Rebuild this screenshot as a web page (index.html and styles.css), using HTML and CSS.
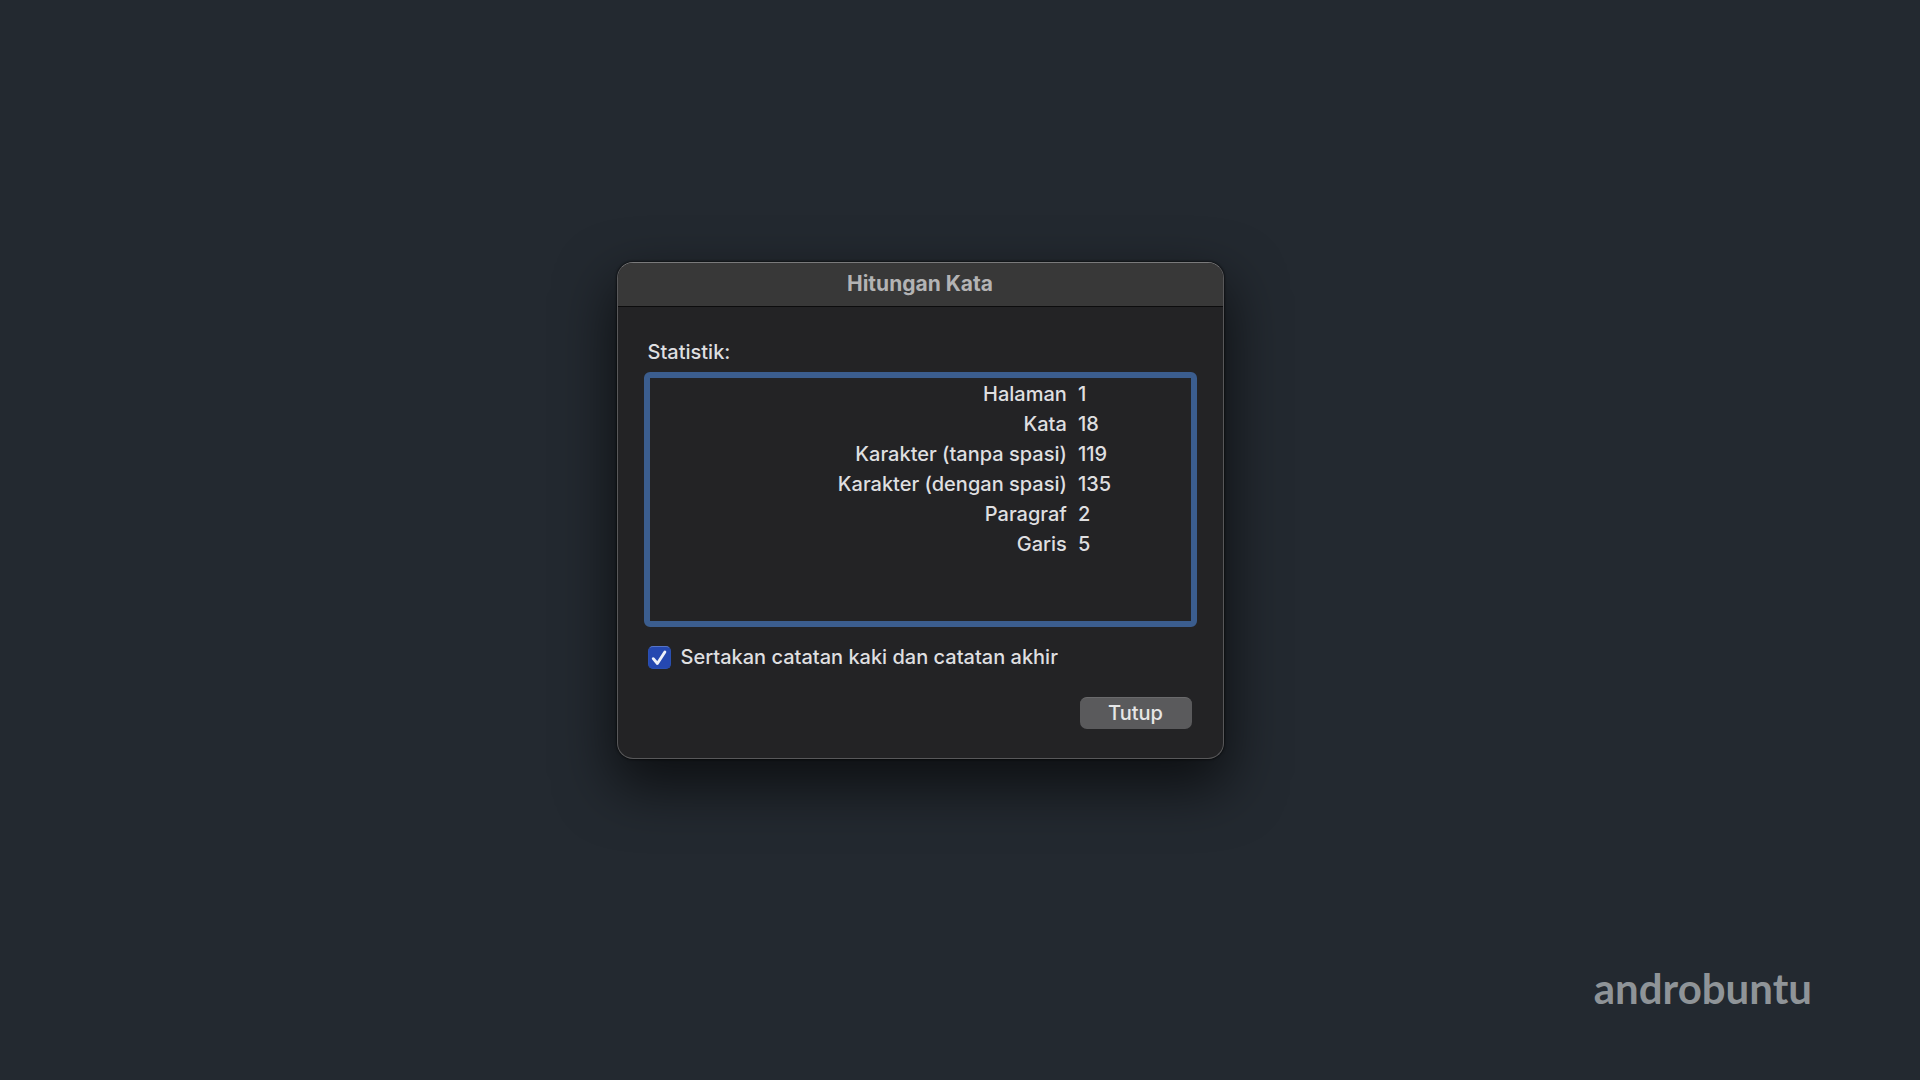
FILE: index.html
```html
<!DOCTYPE html>
<html lang="id">
<head>
<meta charset="utf-8">
<meta name="viewport" content="width=device-width, initial-scale=1">
<title>Hitungan Kata</title>
<link rel="stylesheet" href="styles.css">
</head>
<body>
<main class="desktop">
  <section class="dialog" role="dialog" aria-labelledby="dialog-title">
    <header class="titlebar">
      <h1 class="title" id="dialog-title">Hitungan Kata</h1>
    </header>
    <form class="content">
      <h2 class="heading" id="stats-label">Statistik:</h2>
      <div class="stats-box">
        <table class="stats" aria-labelledby="stats-label">
          <tbody>
            <tr><th scope="row">Halaman</th><td>1</td></tr>
            <tr><th scope="row">Kata</th><td>18</td></tr>
            <tr><th scope="row">Karakter (tanpa spasi)</th><td>119</td></tr>
            <tr><th scope="row">Karakter (dengan spasi)</th><td>135</td></tr>
            <tr><th scope="row">Paragraf</th><td>2</td></tr>
            <tr><th scope="row">Garis</th><td>5</td></tr>
          </tbody>
        </table>
      </div>
      <div class="option">
        <span class="tick">
          <input class="tick-input" type="checkbox" id="footnotes" checked>
          <svg class="tick-mark" viewBox="0 0 24 24" aria-hidden="true"><path d="M5.5 13.2 9.8 18.2 17.6 6.2"/></svg>
        </span>
        <label for="footnotes">Sertakan catatan kaki dan catatan akhir</label>
      </div>
      <div class="actions">
        <button class="button" type="button">Tutup</button>
      </div>
    </form>
  </section>
  <p class="brand">androbuntu</p>
</main>
</body>
</html>
```
FILE: styles.css
```css
* {
  box-sizing: border-box;
}

body {
  margin: 0;
  background: #232930;
  color: #dfdfe0;
  font-family: Inter, "Liberation Sans", sans-serif;
  font-size: 20px;
  font-weight: 500;
  line-height: 30px;
}

.desktop {
  display: grid;
  min-height: 100vh;
}

.dialog,
.brand {
  grid-area: 1 / 1;
}

.dialog {
  place-self: center;
  width: 100%;
  max-width: 607px;
  margin: 0 80px 59px 0;
  overflow: hidden;
  border: 1px solid #58585a;
  border-top-color: #7a7a7b;
  border-radius: 16px;
  background: #232325;
  box-shadow: 0 0 2px 1px rgba(0, 0, 0, 0.5), 0 24px 56px 4px rgba(0, 0, 0, 0.62);
}

.titlebar {
  padding: 6px 0 7px;
  border-bottom: 1px solid #0c0c0d;
  background: #383838;
  text-align: center;
}

.title {
  margin: 0;
  color: #b3b3b4;
  font-size: 21px;
  font-weight: 700;
}

.content {
  padding: 30px 26px 29px;
}

.heading {
  margin: 0 0 5px 4px;
  font-size: 20px;
  font-weight: 500;
}

.stats-box {
  min-height: 255px;
  padding-top: 1px;
  border: 6px solid #3b5d8e;
  border-radius: 6px;
}

.stats {
  width: 100%;
  border-collapse: collapse;
}

.stats th {
  width: 79%;
  padding: 0 10px 0 0;
  font-weight: 500;
  text-align: right;
}

.stats td {
  padding: 0 0 0 1px;
}

.option {
  display: flex;
  align-items: center;
  gap: 10px;
  margin: 15px 0 0 4px;
}

.tick {
  display: grid;
  width: 23px;
  height: 23px;
}

.tick-input,
.tick-mark {
  grid-area: 1 / 1;
  width: 100%;
  height: 100%;
}

.tick-input {
  margin: 0;
  appearance: none;
  border: 1px solid #2a4fb0;
  border-top-color: #5674c8;
  border-radius: 5px;
  background: #2548b0;
}

.tick-mark {
  display: none;
  fill: none;
  stroke: #eef1fa;
  stroke-width: 3;
  stroke-linecap: round;
  stroke-linejoin: round;
  pointer-events: none;
}

.tick-input:checked + .tick-mark {
  display: block;
}

.actions {
  display: flex;
  justify-content: flex-end;
  margin: 25px 5px 0 0;
}

.button {
  width: 112px;
  height: 32px;
  padding: 0 0 2px;
  border: 0;
  border-top: 1px solid #6a6a6c;
  border-radius: 7px;
  background: #5a5a5c;
  color: #e6e6e7;
  font: inherit;
}

.brand {
  place-self: end;
  margin: 0 108px 68px 0;
  color: #8f9498;
  font-family: Lato, sans-serif;
  font-size: 42px;
  font-weight: 700;
  line-height: 48px;
}
```
